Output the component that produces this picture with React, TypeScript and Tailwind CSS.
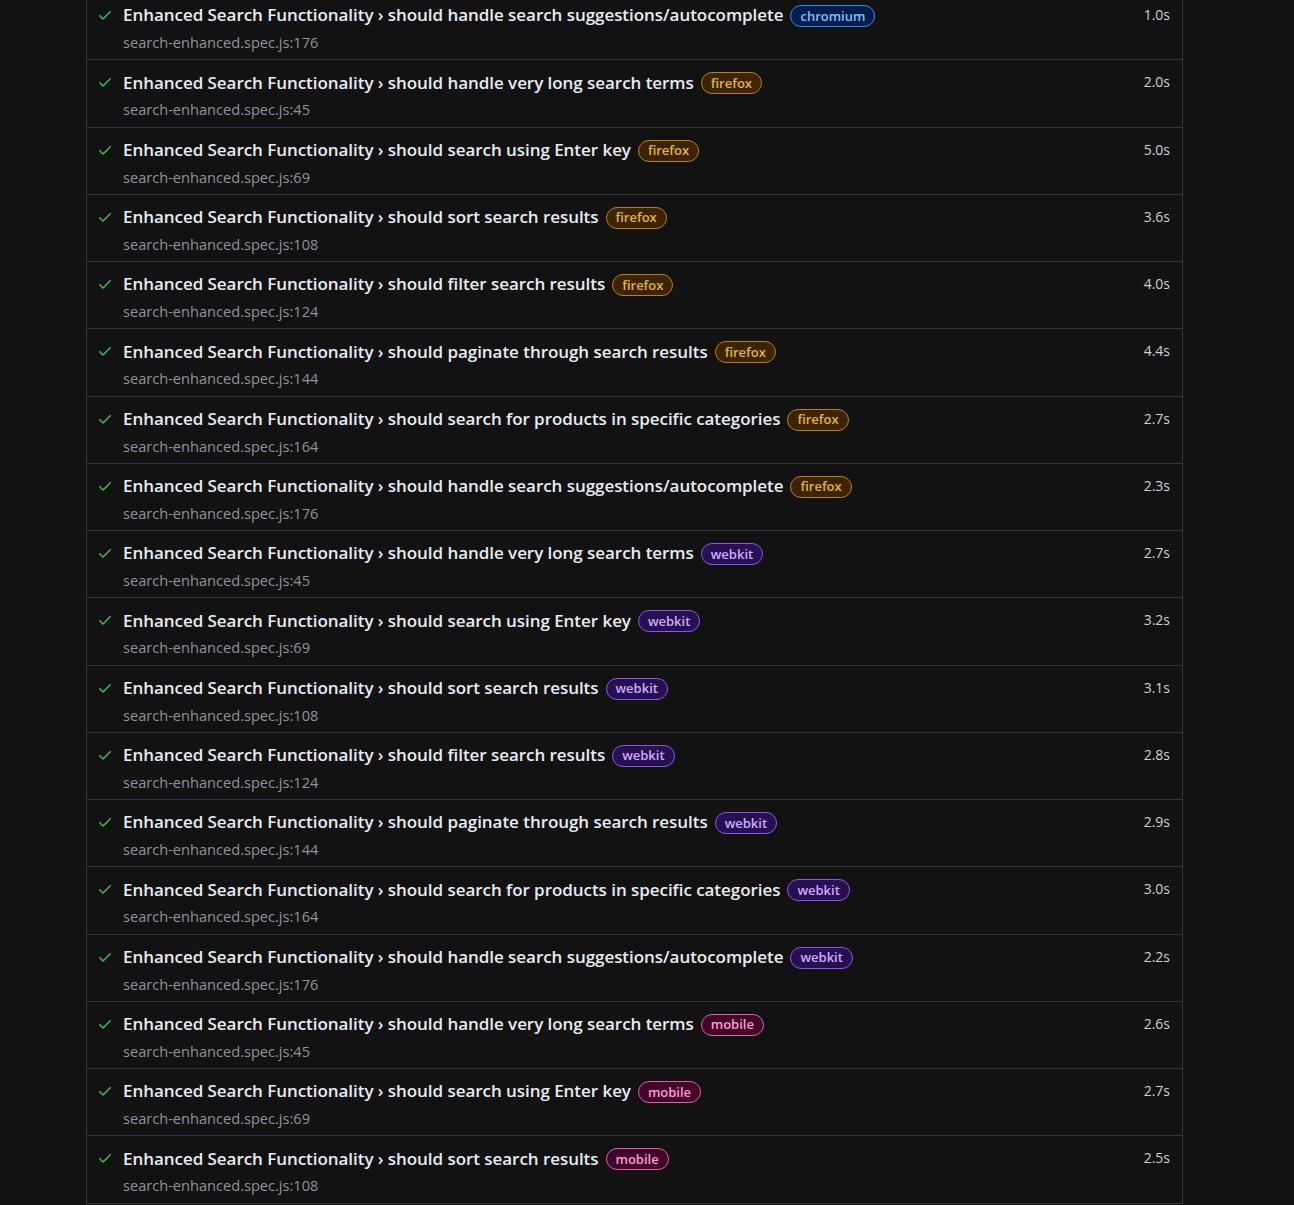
import React from "react";

type Proj = "chromium" | "firefox" | "webkit" | "mobile";

const rows: [string, Proj, number, string][] = [
  ["should handle search suggestions/autocomplete", "chromium", 176, "1.0s"],
  ["should handle very long search terms", "firefox", 45, "2.0s"],
  ["should search using Enter key", "firefox", 69, "5.0s"],
  ["should sort search results", "firefox", 108, "3.6s"],
  ["should filter search results", "firefox", 124, "4.0s"],
  ["should paginate through search results", "firefox", 144, "4.4s"],
  ["should search for products in specific categories", "firefox", 164, "2.7s"],
  ["should handle search suggestions/autocomplete", "firefox", 176, "2.3s"],
  ["should handle very long search terms", "webkit", 45, "2.7s"],
  ["should search using Enter key", "webkit", 69, "3.2s"],
  ["should sort search results", "webkit", 108, "3.1s"],
  ["should filter search results", "webkit", 124, "2.8s"],
  ["should paginate through search results", "webkit", 144, "2.9s"],
  ["should search for products in specific categories", "webkit", 164, "3.0s"],
  ["should handle search suggestions/autocomplete", "webkit", 176, "2.2s"],
  ["should handle very long search terms", "mobile", 45, "2.6s"],
  ["should search using Enter key", "mobile", 69, "2.7s"],
  ["should sort search results", "mobile", 108, "2.5s"],
];

const badge: Record<Proj, string> = {
  chromium: "bg-[#051d4d] border-[#388bfd] text-[#79c0ff]",
  firefox: "bg-[#3d2400] border-[#bb8009] text-[#e3b341]",
  webkit: "bg-[#271052] border-[#8957e5] text-[#d2a8ff]",
  mobile: "bg-[#42062a] border-[#db61a2] text-[#ff9bce]",
};

function Check() {
  return (
    <svg width="16" height="16" viewBox="0 0 16 16" className="shrink-0 text-[#3fb950]" fill="currentColor">
      <path d="M13.78 4.22a.75.75 0 0 1 0 1.06l-7.25 7.25a.75.75 0 0 1-1.06 0L2.22 9.28a.751.751 0 0 1 .018-1.042.751.751 0 0 1 1.042-.018L6 10.94l6.72-6.72a.75.75 0 0 1 1.06 0Z" />
    </svg>
  );
}

export default function App() {
  return (
    <div className="min-h-[1205px] bg-[#121212] overflow-hidden" style={{ fontFamily: '"Open Sans", "Noto Sans", sans-serif' }}>
      <div className="ml-[86px] w-[1097px] mt-[-7px] border-x border-[#30363d]">
        {rows.map(([name, proj, line, dur], i) => (
          <div key={i} className="flex border-b border-[#30363d] pl-[10px] pr-[12px] pt-[10px] pb-[7.25px]">
            <div className="flex-1 min-w-0">
              <div className="flex items-center h-[24px]">
                <Check />
                <span className="ml-[10px] text-[17px] font-semibold text-[#e6edf3] tracking-[-0.05px] whitespace-nowrap">
                  Enhanced Search Functionality › {name}
                </span>
                <span className={`ml-[7px] mt-[2px] h-[22px] px-[9px] rounded-full border flex items-center text-[13px] font-semibold leading-none ${badge[proj]}`}>
                  {proj}
                </span>
              </div>
              <div className="mt-[5px] ml-[26px] h-[20px] leading-[20px] text-[14.6px] text-[#8b949e] whitespace-nowrap">
                search-enhanced.spec.js:{line}
              </div>
            </div>
            <div className="h-[24px] leading-[24px] text-[14px] text-[#c9d1d9]">{dur}</div>
          </div>
        ))}
      </div>
    </div>
  );
}
